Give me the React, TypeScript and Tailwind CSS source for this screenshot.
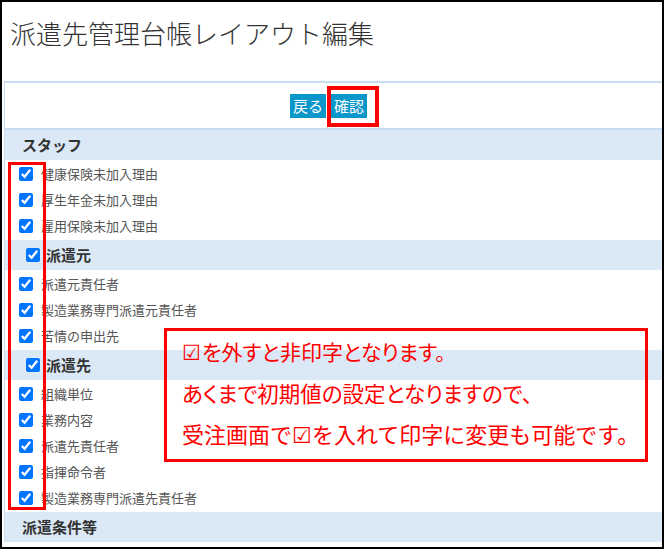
import React from 'react';

type Section = {
    title: string;
    checkable: boolean;
    items: string[];
};

const sections: Section[] = [
    { title: 'スタッフ', checkable: false, items: ['健康保険未加入理由', '厚生年金未加入理由', '雇用保険未加入理由'] },
    { title: '派遣元', checkable: true, items: ['派遣元責任者', '製造業務専門派遣元責任者', '苦情の申出先'] },
    { title: '派遣先', checkable: true, items: ['組織単位', '業務内容', '派遣先責任者', '指揮命令者', '製造業務専門派遣先責任者'] },
    { title: '派遣条件等', checkable: false, items: [] },
];

const Check: React.FC = () => (
    <input
        type="checkbox"
        checked
        readOnly
        className="m-0 w-[14px] h-[14px] shrink-0 accent-[#0075ff]"
    />
);

const Box: React.FC = () => <span className="inline-block w-[20px]">☑</span>;

const App: React.FC = () => {
    return (
        <div className="relative w-[664px] h-[550px] bg-white overflow-hidden font-['Noto_Sans_CJK_JP',sans-serif]">
            <div className="h-[549px] border-2 border-black overflow-hidden">
                <h1 className="h-[79px] pl-[8px] pt-[13px] text-[26px] leading-[36px] font-light text-[#333]">
                    派遣先管理台帳レイアウト編集
                </h1>

                <div className="ml-[2px] border-l border-[#c6ddf3]">
                    <div className="h-[49px] border-t-2 border-b-2 border-[#c6ddf3] flex items-center justify-center gap-[5px] pr-[10px]">
                        <button className="h-[24px] px-[3px] bg-[#0b97c9] text-white text-[15px] leading-[24px]">戻る</button>
                        <button className="h-[24px] px-[3px] bg-[#0b97c9] text-white text-[15px] leading-[24px]">確認</button>
                    </div>

                    {sections.map((s) => (
                        <div key={s.title}>
                            {s.checkable ? (
                                <div className="h-[30px] bg-[#dbe9f7] flex items-center pl-[21px] gap-[6px]">
                                    <Check />
                                    <span className="text-[15px] font-bold text-[#333]">{s.title}</span>
                                </div>
                            ) : (
                                <div className="h-[30px] bg-[#dbe9f7] flex items-center pl-[17px]">
                                    <span className="text-[15px] font-bold text-[#333]">{s.title}</span>
                                </div>
                            )}
                            {s.items.length > 0 && (
                                <ul className="py-[1px]">
                                    {s.items.map((item) => (
                                        <li key={item} className="h-[26px] flex items-center pl-[14px] gap-[8px]">
                                            <Check />
                                            <span className="text-[13px] text-[#555]">{item}</span>
                                        </li>
                                    ))}
                                </ul>
                            )}
                        </div>
                    ))}
                </div>
            </div>

            {/* annotations over the screenshot */}
            <div className="absolute left-[327px] top-[86px] w-[52px] h-[41px] border-4 border-[#ff0000]" />
            <div className="absolute left-[8px] top-[162px] w-[38px] h-[348px] border-[3px] border-[#ff0000]" />
            <div className="absolute left-[164px] top-[328px] w-[484px] h-[134px] border-[3px] border-[#ff0000] pl-[15px] leading-[41px] text-[#ff0000] whitespace-nowrap">
                <p className="text-[21px] [font-feature-settings:'palt']"><Box />を外すと非印字となります。</p>
                <p className="text-[21.5px] [font-feature-settings:'palt']">あくまで初期値の設定となりますので、</p>
                <p className="text-[22px]">受注画面で<Box />を入れて印字に変更も可能です。</p>
            </div>
        </div>
    );
};

export default App;
